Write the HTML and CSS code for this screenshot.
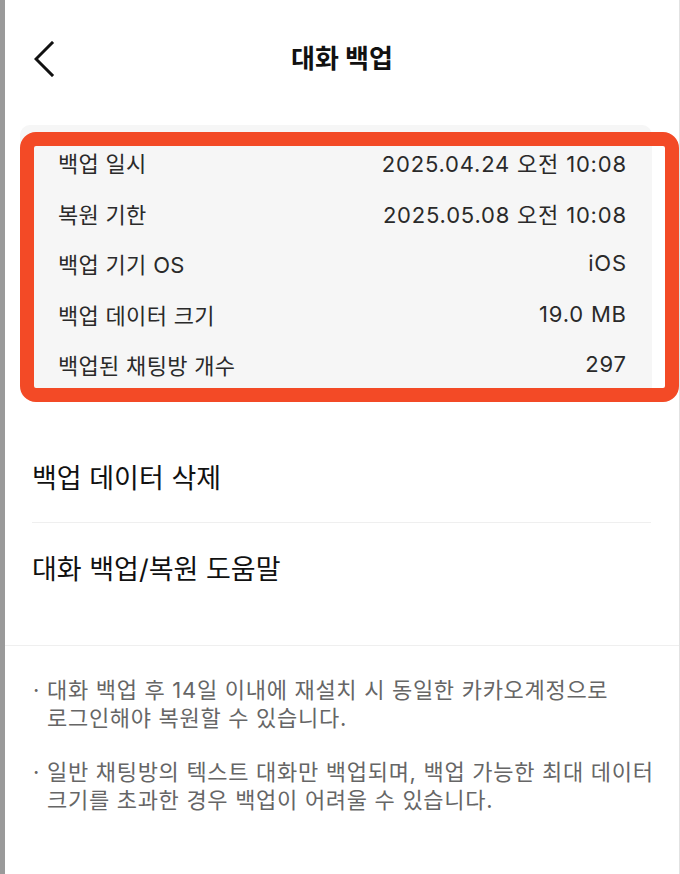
FILE: index.html
```html
<!DOCTYPE html>
<html lang="ko">
<head>
<meta charset="utf-8">
<title>대화 백업</title>
<link rel="stylesheet" href="styles.css">
</head>
<body>
<div class="app">
  <div class="edge"></div>
  <main class="screen">
    <header class="topbar">
      <button class="back" aria-label="뒤로">
        <svg width="22" height="36" viewBox="0 0 22 36"><polyline points="18,2 2,18 18,34" fill="none" stroke="#111" stroke-width="3" stroke-linecap="square"/></svg>
      </button>
      <h1 class="title">대화 백업</h1>
    </header>

    <section class="info-wrap">
      <div class="info-card">
        <div class="row"><span class="label">백업 일시</span><span class="value">2025.04.24 오전 10:08</span></div>
        <div class="row"><span class="label">복원 기한</span><span class="value">2025.05.08 오전 10:08</span></div>
        <div class="row"><span class="label">백업 기기 OS</span><span class="value">iOS</span></div>
        <div class="row"><span class="label">백업 데이터 크기</span><span class="value">19.0 MB</span></div>
        <div class="row"><span class="label">백업된 채팅방 개수</span><span class="value">297</span></div>
      </div>
      <div class="highlight"></div>
    </section>

    <nav class="menu">
      <div class="menu-item">백업 데이터 삭제</div>
      <div class="menu-item">대화 백업/복원 도움말</div>
    </nav>

    <section class="notes">
      <p class="note">대화 백업 후 14일 이내에 재설치 시 동일한 카카오계정으로 로그인해야 복원할 수 있습니다.</p>
      <p class="note">일반 채팅방의 텍스트 대화만 백업되며, 백업 가능한 최대 데이터 크기를 초과한 경우 백업이 어려울 수 있습니다.</p>
    </section>
  </main>
</div>
</body>
</html>
```

FILE: styles.css
```css
html, body {
  margin: 0;
  padding: 0;
  background: #fff;
}
body {
  font-family: Inter, "Noto Sans CJK KR", "Noto Sans", sans-serif;
  color: #111;
}
.app {
  display: flex;
  width: 680px;
  min-height: 874px;
}
.edge {
  width: 5px;
  flex: none;
  background: #9a9a9a;
}
.screen {
  flex: 1;
  border-right: 1px solid #e2e2e2;
  min-height: 874px;
}
.topbar {
  position: relative;
  height: 125px;
  display: flex;
  align-items: flex-start;
  justify-content: center;
}
.back {
  position: absolute;
  left: 29px;
  top: 41px;
  border: 0;
  padding: 0;
  background: none;
  width: 22px;
  height: 36px;
}
.back svg { display: block; }
.title {
  margin: 40px 0 0;
  font-size: 26px;
  line-height: 38px;
  font-weight: 700;
  color: #111;
}
.info-wrap {
  position: relative;
}
.info-card {
  margin-left: 15px;
  width: 632px;
  background: #f6f6f6;
  border-radius: 10px;
  padding: 12px 0 9px;
  box-sizing: border-box;
}
.row {
  height: 50.5px;
  display: flex;
  align-items: center;
  justify-content: space-between;
  padding: 0 26px 0 38px;
  font-size: 22px;
  color: #2a2a2a;
}
.label {
  letter-spacing: 0.3px;
}
.value {
  letter-spacing: 0.8px;
  margin-right: -0.8px;
}
.highlight {
  position: absolute;
  left: 15px;
  top: 7px;
  width: 659px;
  height: 270px;
  box-sizing: border-box;
  border: 14px solid #f34a26;
  border-radius: 16px;
  pointer-events: none;
}
.menu {
  margin-top: 33px;
  padding: 0 28px 0 27px;
}
.menu-item {
  height: 90px;
  display: flex;
  align-items: center;
  font-size: 27px;
  color: #111;
}
.menu-item + .menu-item {
  border-top: 1px solid #efefef;
}
.notes {
  margin-top: 32px;
  border-top: 1px solid #efefef;
  padding: 30px 12px 0 42px;
}
.note {
  position: relative;
  margin: 0 0 25px;
  font-size: 22px;
  line-height: 28.5px;
  letter-spacing: 0.7px;
  word-break: keep-all;
  color: #666;
}
.note::before {
  content: "·";
  position: absolute;
  left: -14px;
  top: 0;
}
```
